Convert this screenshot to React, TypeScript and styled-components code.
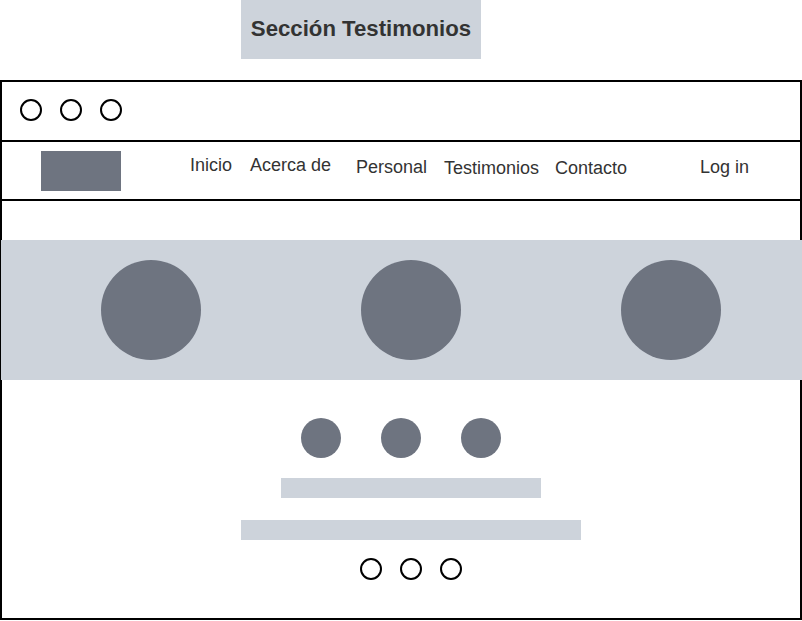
import React from 'react';
import styled, { createGlobalStyle } from 'styled-components';

const GlobalStyle = createGlobalStyle`
    html, body {
        margin: 0;
        padding: 0;
        background: #ffffff;
    }
    body {
        font-family: 'Liberation Sans', Arial, sans-serif;
        color: #333333;
    }
`;

const Page = styled.div`
    width: 802px;
    height: 621px;
    overflow: hidden;
`;

const TitleBox = styled.div`
    box-sizing: border-box;
    margin-left: 241px;
    width: 240px;
    height: 59px;
    padding-bottom: 2px;
    background: #cdd3db;
    display: flex;
    align-items: center;
    justify-content: center;
    font-size: 22.2px;
    font-weight: bold;
    color: #333333;
`;

const Frame = styled.div`
    box-sizing: border-box;
    margin-top: 21px;
    width: 802px;
    height: 540px;
    border: 2px solid #000000;
    display: flex;
    flex-direction: column;
`;

const TopBar = styled.div`
    box-sizing: border-box;
    height: 60px;
    border-bottom: 2px solid #000000;
    display: flex;
    align-items: flex-start;
    padding: 17px 0 0 18px;
    gap: 18px;
`;

const Ring = styled.span`
    box-sizing: border-box;
    width: 22px;
    height: 22px;
    border: 2px solid #000000;
    border-radius: 50%;
`;

const NavBar = styled.div`
    height: 57px;
    border-bottom: 2px solid #000000;
    display: flex;
    align-items: flex-start;
    padding-left: 39px;
`;

const Logo = styled.div`
    width: 80px;
    height: 40px;
    margin-top: 9px;
    margin-right: 69px;
    background: #6e7480;
`;

const NavLink = styled.span<{ $w?: number; $top: number }>`
    width: ${p => (p.$w ? `${p.$w}px` : 'auto')};
    margin-top: ${p => p.$top}px;
    font-size: 18px;
    color: #333333;
    white-space: nowrap;
`;

const Content = styled.div`
    display: flex;
    flex-direction: column;
    align-items: center;
`;

const Band = styled.div`
    align-self: stretch;
    margin: 39px -2px 0 -1px;
    height: 140px;
    background: #cdd3db;
    display: flex;
    align-items: center;
    justify-content: space-between;
    padding: 0 81px 0 100px;
`;

const Avatar = styled.div<{ $size: number }>`
    width: ${p => p.$size}px;
    height: ${p => p.$size}px;
    border-radius: 50%;
    background: #6e7480;
`;

const DotRow = styled.div<{ $gap: number; $top: number; $shift?: number }>`
    display: flex;
    gap: ${p => p.$gap}px;
    margin-top: ${p => p.$top}px;
    margin-left: ${p => p.$shift ?? 0}px;
`;

const TextLine = styled.div<{ $w: number; $top: number }>`
    width: ${p => p.$w}px;
    height: 20px;
    margin-top: ${p => p.$top}px;
    margin-left: 20px;
    background: #cdd3db;
`;

const links = [
    { label: 'Inicio', w: 60, top: 13 },
    { label: 'Acerca de', w: 106, top: 13 },
    { label: 'Personal', w: 88, top: 15 },
    { label: 'Testimonios', w: 111, top: 16 },
    { label: 'Contacto', w: 145, top: 16 },
    { label: 'Log in', top: 15 },
];

const App: React.FC = () => {
    return (
        <Page>
            <GlobalStyle />
            <TitleBox>Sección Testimonios</TitleBox>
            <Frame>
                <TopBar>
                    <Ring />
                    <Ring />
                    <Ring />
                </TopBar>
                <NavBar>
                    <Logo />
                    {links.map(l => (
                        <NavLink key={l.label} $w={l.w} $top={l.top}>
                            {l.label}
                        </NavLink>
                    ))}
                </NavBar>
                <Content>
                    <Band>
                        <Avatar $size={100} />
                        <Avatar $size={100} />
                        <Avatar $size={100} />
                    </Band>
                    <DotRow $gap={40} $top={38}>
                        <Avatar $size={40} />
                        <Avatar $size={40} />
                        <Avatar $size={40} />
                    </DotRow>
                    <TextLine $w={260} $top={20} />
                    <TextLine $w={340} $top={22} />
                    <DotRow $gap={18} $top={18} $shift={20}>
                        <Ring />
                        <Ring />
                        <Ring />
                    </DotRow>
                </Content>
            </Frame>
        </Page>
    );
};

export default App;
